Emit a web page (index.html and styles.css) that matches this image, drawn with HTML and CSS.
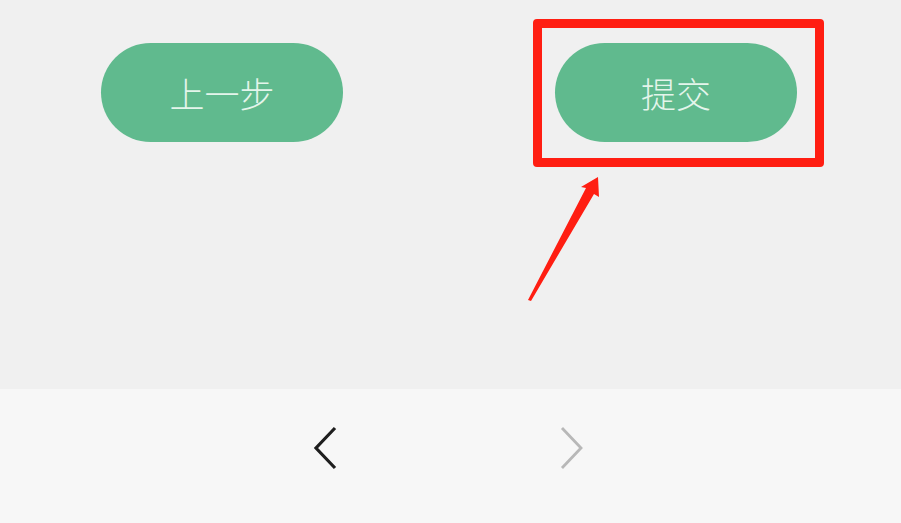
FILE: index.html
```html
<!DOCTYPE html>
<html lang="zh-CN">
<head>
    <meta charset="UTF-8">
    <meta name="viewport" content="width=device-width, initial-scale=1.0">
    <title>提交</title>
    <link rel="stylesheet" href="styles.css">
</head>
<body>
    <div class="page">
        <div class="actions">
            <button class="btn">上一步</button>
            <button class="btn">提交</button>
        </div>

        <!-- 标注 -->
        <div class="mark-box"></div>
        <svg class="mark-arrow" width="80" height="130" viewBox="0 0 80 130">
            <polygon points="78,2 79,22 74,19 11,126 8,125 66,13 61,12" fill="#ff1e12"/>
        </svg>
    </div>

    <div class="nav-bar">
        <svg class="nav-icon" width="26" height="46" viewBox="0 0 26 46">
            <polyline points="22,2 3,22 22,42" fill="none" stroke="#1e1e1e" stroke-width="3.2"/>
        </svg>
        <svg class="nav-icon" width="26" height="46" viewBox="0 0 26 46">
            <polyline points="3,2 22,22 3,42" fill="none" stroke="#b8b8b8" stroke-width="2.8"/>
        </svg>
    </div>
</body>
</html>
```

FILE: styles.css
```css
body {
    margin: 0;
    padding: 0;
    background-color: #f0f0f0;
    font-family: "Noto Sans CJK SC", "Noto Sans", sans-serif;
}

.page {
    position: relative;
    height: 389px;
}

.actions {
    display: flex;
    gap: 212px;
    padding: 43px 0 0 101px;
}

.btn {
    width: 242px;
    height: 99px;
    border: none;
    border-radius: 50px;
    background-color: #60ba8e;
    color: #e4f5eb;
    font-family: inherit;
    font-size: 35px;
    font-weight: 300;
    padding: 0;
}

.mark-box {
    position: absolute;
    left: 533px;
    top: 19px;
    width: 273px;
    height: 130px;
    border: 9px solid #ff1e12;
    border-radius: 4px;
}

.mark-arrow {
    position: absolute;
    left: 520px;
    top: 175px;
}

.nav-bar {
    height: 134px;
    background-color: #f7f7f7;
    display: flex;
    gap: 220px;
    padding: 37px 0 0 313px;
    box-sizing: border-box;
}
```
